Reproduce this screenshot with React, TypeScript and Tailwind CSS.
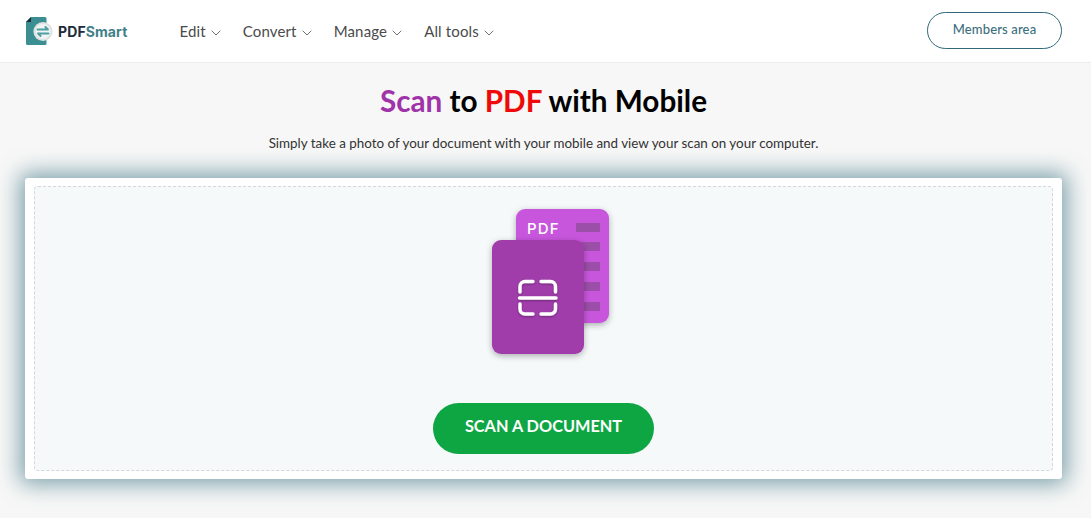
import { ChevronDown } from "lucide-react";

const navItems = ["Edit", "Convert", "Manage", "All tools"];

function Logo() {
  return (
    <div className="flex items-center">
      <svg width="32" height="30" viewBox="0 0 32 30" className="shrink-0">
        <path d="M5 1H19a1.5 1.5 0 0 1 1.5 1.5V27.5a1.5 1.5 0 0 1-1.5 1.5H1.5a1.5 1.5 0 0 1-1.5-1.5V6z" fill="#3b8f92" />
        <path d="M5 1V6H0z" fill="#1d2b3a" />
        <circle cx="17" cy="15.5" r="9.6" fill="#dfe3e3" />
        <circle cx="17" cy="15.5" r="7.4" fill="#f1f4f4" />
        <path d="M11.5 13.5H22M22 13.5L19.4 11M22.5 17.5H12M12 17.5L14.6 20" stroke="#4f9fa2" strokeWidth="1.9" fill="none" strokeLinecap="round" />
      </svg>
      <span className="font-['Inter',sans-serif] text-[14px] font-bold tracking-[0.1px] text-[#1d2b3a]">
        PDF<span className="text-[#3f7f88]">Smart</span>
      </span>
    </div>
  );
}

function ScanIllustration() {
  return (
    <svg width="160" height="170" viewBox="0 0 160 170" className="overflow-visible">
      <defs>
        <filter id="pageShadow" x="-30%" y="-30%" width="160%" height="160%">
          <feDropShadow dx="0" dy="2" stdDeviation="3" floodColor="#000" floodOpacity="0.3" />
        </filter>
        <filter id="iconShadow" x="-30%" y="-30%" width="160%" height="160%">
          <feDropShadow dx="0" dy="1" stdDeviation="1" floodColor="#000" floodOpacity="0.35" />
        </filter>
      </defs>
      <rect x="46" y="14" width="93" height="114" rx="9" fill="#c757dc" filter="url(#pageShadow)" />
      <text x="57" y="39" fill="#fff" fontSize="15" fontWeight="500" letterSpacing="1.2" fontFamily="Inter, sans-serif">PDF</text>
      <rect x="106" y="28" width="24" height="9" fill="#9c4fa9" />
      <rect x="106" y="47" width="24" height="9" fill="#9c4fa9" />
      <rect x="106" y="67" width="24" height="9" fill="#9c4fa9" />
      <rect x="106" y="87" width="24" height="9" fill="#9c4fa9" />
      <rect x="106" y="107" width="24" height="9" fill="#9c4fa9" />
      <rect x="22" y="45" width="92" height="114" rx="9" fill="#a03cab" filter="url(#pageShadow)" />
      <g stroke="#fff" strokeWidth="3.4" fill="none" strokeLinecap="round" strokeLinejoin="round" filter="url(#iconShadow)">
        <path d="M63 86.5H55a5 5 0 0 0-5 5V97" />
        <path d="M71 86.5H80.5a5 5 0 0 1 5 5V97" />
        <path d="M63 119H55a5 5 0 0 1-5-5V109" />
        <path d="M71 119H80.5a5 5 0 0 0 5-5V109" />
        <path d="M49.5 103H86" />
      </g>
    </svg>
  );
}

export default function App() {
  return (
    <div className="h-[518px] overflow-hidden bg-[#f7f7f7] font-['Lato',sans-serif]">
      <header className="flex h-[63px] items-center border-b border-[#ececec] bg-white pl-[26px] pr-[29px]">
        <Logo />
        <nav className="ml-[52px] flex items-center gap-[19px] text-[15px] tracking-[0.15px] text-[#4a4a4a]">
          {navItems.map((item) => (
            <div key={item} className="flex items-center gap-[2px]">
              <span>{item}</span>
              <ChevronDown className="mt-[4px] h-[16px] w-[16px]" strokeWidth={1.2} />
            </div>
          ))}
        </nav>
        <button className="ml-auto mb-[2px] h-[37px] w-[135px] rounded-full border border-[#31697a] text-[13px] font-medium tracking-[0.15px] text-[#3c6f7d]">
          Members area
        </button>
      </header>

      <main className="flex flex-col items-center pr-[4px]">
        <h1 className="mt-[20px] text-[29.7px] leading-[36px] font-bold text-black">
          <span className="text-[#a033a8]">Scan</span> to <span className="text-[#ee0a0a]">PDF</span> with Mobile
        </h1>
        <p className="mt-[15px] text-[13.4px] leading-[18px] text-[#333]">
          Simply take a photo of your document with your mobile and view your scan on your computer.
        </p>

        <div className="mt-[26px] w-[1037px] rounded-[3px] bg-white px-[9px] py-[8px] shadow-[0_0_22px_5px_rgba(58,115,130,0.65)]">
          <div className="flex h-[285px] flex-col items-center rounded-[4px] border border-dashed border-[#d3d8d8] bg-[#f5f9fa]">
            <div className="mt-[8px] ml-[13px]">
              <ScanIllustration />
            </div>
            <button className="mt-[38px] h-[51px] w-[221px] rounded-full bg-[#0ea543] pb-[4px] text-[16.3px] font-bold text-white">
              SCAN A DOCUMENT
            </button>
          </div>
        </div>
      </main>
    </div>
  );
}
